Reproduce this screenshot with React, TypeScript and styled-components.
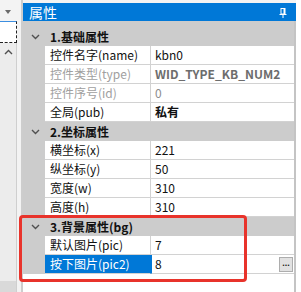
import React from 'react';
import styled, { createGlobalStyle } from 'styled-components';

const GlobalStyle = createGlobalStyle`
  html, body {
    margin: 0;
    padding: 0;
    width: 301px;
    height: 292px;
    overflow: hidden;
    background: #f0f0f0;
  }
  body {
    font-family: "Noto Sans CJK SC", "Noto Sans", sans-serif;
    font-size: 12px;
  }
`;

interface Prop {
  name: string;
  value: string;
  readOnly?: boolean;
  bold?: boolean;
  selected?: boolean;
  hasButton?: boolean;
}

interface Category {
  title: string;
  props: Prop[];
}

const categories: Category[] = [
  {
    title: '1.基础属性',
    props: [
      { name: '控件名字(name)', value: 'kbn0' },
      { name: '控件类型(type)', value: 'WID_TYPE_KB_NUM2', readOnly: true, bold: true },
      { name: '控件序号(id)', value: '0', readOnly: true },
      { name: '全局(pub)', value: '私有', bold: true },
    ],
  },
  {
    title: '2.坐标属性',
    props: [
      { name: '横坐标(x)', value: '221' },
      { name: '纵坐标(y)', value: '50' },
      { name: '宽度(w)', value: '310' },
      { name: '高度(h)', value: '310' },
    ],
  },
  {
    title: '3.背景属性(bg)',
    props: [
      { name: '默认图片(pic)', value: '7' },
      { name: '按下图片(pic2)', value: '8', selected: true, hasButton: true },
    ],
  },
];

const Chevron: React.FC<{ up?: boolean }> = ({ up }) => (
  <svg width="9" height="6" viewBox="0 0 9 6">
    <path
      d={up ? 'M1 5 L4.5 1.5 L8 5' : 'M1 1 L4.5 4.5 L8 1'}
      fill="none"
      stroke="#505050"
      strokeWidth="1.4"
    />
  </svg>
);

const PinIcon: React.FC = () => (
  <svg width="8" height="11" viewBox="0 0 8 11">
    <rect x="2" y="1.5" width="4" height="5.5" fill="none" stroke="#fff" strokeWidth="1" />
    <rect x="4.5" y="1" width="1.5" height="6.5" fill="#fff" />
    <rect x="0.5" y="7" width="7" height="1" fill="#fff" />
    <rect x="3.5" y="8" width="1" height="3" fill="#fff" />
  </svg>
);

const App: React.FC = () => (
  <>
    <GlobalStyle />
    <Screen>
      <LeftStrip>
        <LeftColumn>
          <DropTop>
            <Caret />
          </DropTop>
          <FocusItem />
          <ScrollTrack>
            <Chevron up />
          </ScrollTrack>
          <ScrollCorner />
        </LeftColumn>
        <Gutter />
        <Splitter />
      </LeftStrip>

      <Panel>
        <TitleBar>
          <TitleText>属性</TitleText>
          <PinIcon />
        </TitleBar>
        <Grid>
          <GridTopPad />
          {categories.map((cat) => (
            <React.Fragment key={cat.title}>
              <CategoryRow>
                <ArrowCell>
                  <Chevron />
                </ArrowCell>
                <CategoryTitle>{cat.title}</CategoryTitle>
              </CategoryRow>
              {cat.props.map((p) => (
                <PropRow key={p.name}>
                  <ArrowCell />
                  <NameCell $selected={p.selected} $readOnly={p.readOnly}>
                    {p.name}
                  </NameCell>
                  <ValueCell $selected={p.selected} $readOnly={p.readOnly} $bold={p.bold}>
                    <span>{p.value}</span>
                    {p.hasButton && <EllipsisButton>...</EllipsisButton>}
                  </ValueCell>
                </PropRow>
              ))}
            </React.Fragment>
          ))}
          <GridFill />
        </Grid>
      </Panel>

      <RightFill />
      <Highlight />
    </Screen>
  </>
);

const Screen = styled.div`
  position: relative;
  display: flex;
  width: 301px;
  height: 292px;
  background: #f0f0f0;
`;

const LeftStrip = styled.div`
  display: flex;
  width: 23px;
  height: 100%;
`;

const LeftColumn = styled.div`
  display: flex;
  flex-direction: column;
  width: 17px;
`;

const DropTop = styled.div`
  height: 21px;
  background: #f3f3f3;
  display: flex;
  align-items: center;
  padding-left: 5px;
`;

const Caret = styled.div`
  width: 0;
  height: 0;
  border-left: 3px solid transparent;
  border-right: 3px solid transparent;
  border-top: 4px solid #6a6a6a;
  margin-top: 2px;
`;

const FocusItem = styled.div`
  height: 20px;
  background: #ffffff;
  border-top: 1px solid #3c8ee0;
  border-bottom: 1px dashed #222;
  border-right: 1px dashed #222;
`;

const ScrollTrack = styled.div`
  flex: 1;
  background: #ececec;
  border-right: 1px solid #cfcfcf;
  display: flex;
  justify-content: center;
  padding-top: 6px;
`;

const ScrollCorner = styled.div`
  height: 11px;
  background: #d9d9d9;
  border-right: 1px solid #cfcfcf;
`;

const Gutter = styled.div`
  width: 4px;
  background: #f3f3f3;
`;

const Splitter = styled.div`
  width: 2px;
  background: #cdcdcd;
`;

const Panel = styled.div`
  display: flex;
  flex-direction: column;
  width: 273px;
  padding-top: 3px;
  background: #f3f3f3;
`;

const TitleBar = styled.div`
  height: 18px;
  background: #0078d7;
  display: flex;
  align-items: center;
  justify-content: space-between;
  padding: 0 9px 0 6px;
`;

const TitleText = styled.span`
  color: #ffffff;
  font-size: 14px;
  line-height: 18px;
`;

const Grid = styled.div`
  flex: 1;
  display: flex;
  flex-direction: column;
  background: #ffffff;
  border-right: 2px solid #c4c4c4;
`;

const GridTopPad = styled.div`
  height: 6px;
  background: #cccccc;
`;

const CategoryRow = styled.div`
  display: flex;
  height: 19px;
  background: #cccccc;
`;

const ArrowCell = styled.div`
  width: 22px;
  flex: none;
  display: flex;
  align-items: center;
  justify-content: center;
  background: #cccccc;
  padding-left: 2px;
  box-sizing: border-box;
`;

const CategoryTitle = styled.span`
  padding-left: 5px;
  font-weight: 700;
  color: #111;
  line-height: 19px;
`;

const PropRow = styled.div`
  display: flex;
  height: 19px;
`;

const NameCell = styled.div<{ $selected?: boolean; $readOnly?: boolean }>`
  width: 106px;
  flex: none;
  box-sizing: border-box;
  padding-left: 5px;
  line-height: 18px;
  white-space: nowrap;
  border-bottom: 1px solid #d2d2d2;
  border-right: 1px solid ${(p) => (p.$selected ? '#0078d7' : '#d2d2d2')};
  background: ${(p) => (p.$selected ? '#0078d7' : '#ffffff')};
  color: ${(p) => (p.$selected ? '#ffffff' : p.$readOnly ? '#a0a0a0' : '#111')};
`;

const ValueCell = styled.div<{ $selected?: boolean; $readOnly?: boolean; $bold?: boolean }>`
  flex: 1;
  display: flex;
  align-items: center;
  justify-content: space-between;
  box-sizing: border-box;
  padding-left: 4px;
  padding-right: 1px;
  line-height: 18px;
  white-space: nowrap;
  border-bottom: 1px solid #d2d2d2;
  border-left: ${(p) => (p.$selected ? '1px solid #0078d7' : 'none')};
  padding-left: ${(p) => (p.$selected ? '3px' : '4px')};
  font-weight: ${(p) => (p.$bold ? 700 : 400)};
  color: ${(p) => (p.$readOnly ? (p.$bold ? '#6d6d6d' : '#8c8c8c') : '#111')};
`;

const EllipsisButton = styled.div`
  width: 14px;
  height: 15px;
  box-sizing: border-box;
  background: #e1e1e1;
  border: 1px solid #adadad;
  font-size: 9px;
  line-height: 11px;
  text-align: center;
  color: #222;
  font-family: "Liberation Sans", sans-serif;
  font-weight: 700;
`;

const GridFill = styled.div`
  flex: 1;
  background: #ffffff;
`;

const RightFill = styled.div`
  flex: 1;
  background: #ffffff;
`;

const Highlight = styled.div`
  position: absolute;
  left: 19px;
  top: 215px;
  width: 228px;
  height: 67px;
  box-sizing: border-box;
  border: 3px solid #e8332b;
  border-radius: 4px;
  pointer-events: none;
`;

export default App;
